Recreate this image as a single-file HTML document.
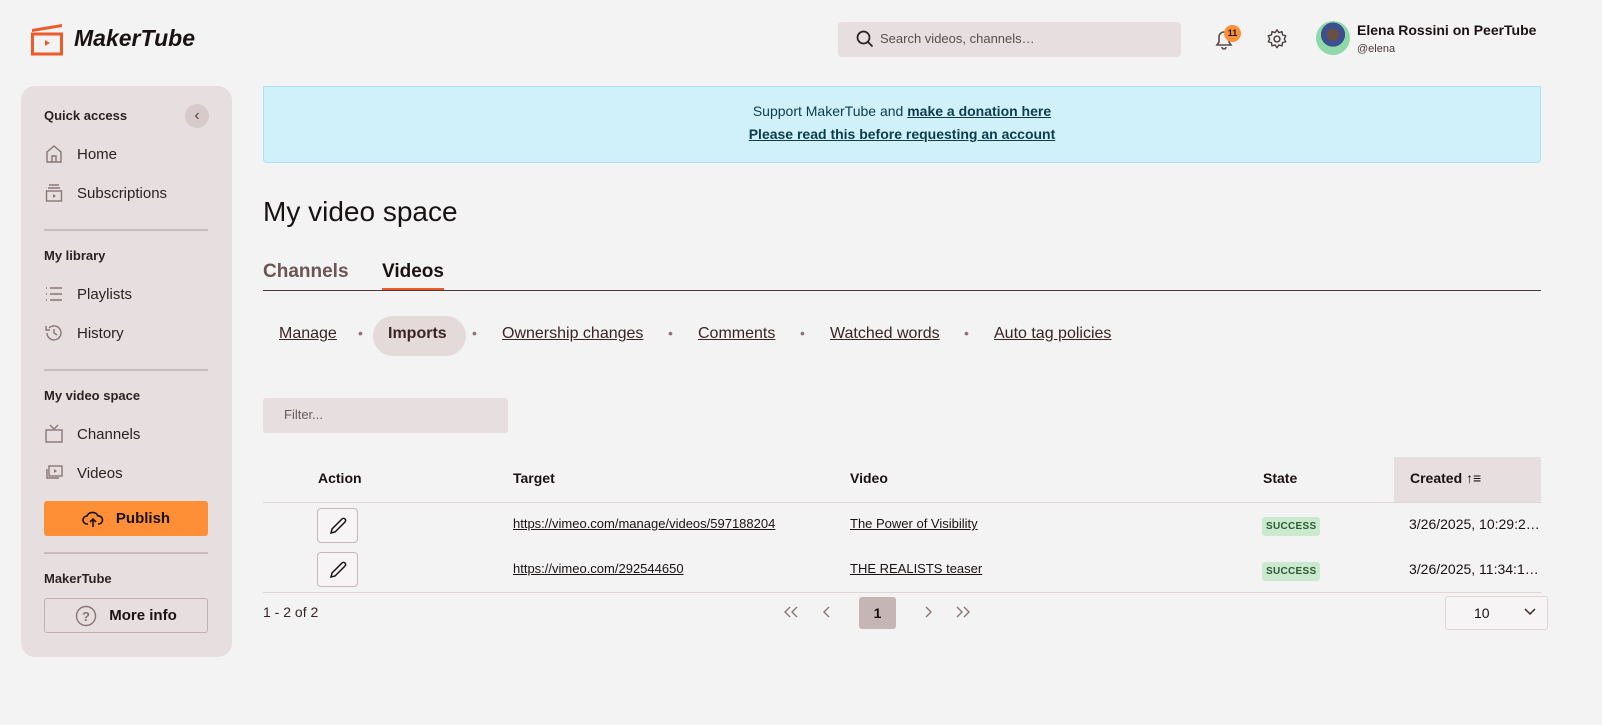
<!DOCTYPE html>
<html><head><meta charset="utf-8"><style>
*{box-sizing:border-box;margin:0;padding:0}
body{width:1602px;height:725px;background:#f3f3f3;font-family:"Liberation Sans",sans-serif;color:#1a1212;position:relative;overflow:hidden;font-size:15px}
.a{position:absolute}
a{color:inherit}
.side{left:21px;top:86px;width:211px;height:571px;background:#e7dfdf;border-radius:14px}
.sh{position:absolute;left:23px;font-size:13px;font-weight:bold;color:#2c1f1f}
.si{position:absolute;left:23px;font-size:15px;color:#2c1f1f;display:flex;align-items:center;gap:13px}
.si svg{width:20px;height:20px}
.hr{position:absolute;left:23px;width:164px;height:2px;background:#c9bcbc}
.u{text-decoration:underline}
.badge{background:#cbe9cf;color:#2d5a33;font-size:10px;font-weight:bold;padding:4px 4px;border-radius:3px;letter-spacing:.3px}
.pen{width:41px;height:35px;border:1px solid #c8b5b5;border-radius:4px;background:#f6f4f4;display:flex;align-items:center;justify-content:center}
.sn{position:absolute;top:325px;font-size:16px;color:#3a2424;white-space:nowrap}
.dot{position:absolute;top:325px;font-size:14px;color:#8a7575}
</style></head><body>
<svg class="a" style="left:31px;top:22px" width="34" height="36" viewBox="0 0 34 36"><path d="M1 7l30-5v3L1 10z" fill="#f05a28"/><rect x="1.5" y="12" width="29" height="20" fill="none" stroke="#f05a28" stroke-width="3"/><path d="M14 18l5 3-5 3z" fill="#f05a28"/></svg>
<div class="a" style="left:74px;top:25px;font-size:23px;font-weight:bold;font-style:italic">MakerTube</div>
<div class="a" style="left:838px;top:22px;width:343px;height:35px;background:#e7dfdf;border-radius:4px"></div>
<svg class="a" style="left:856px;top:30px" width="18" height="18" viewBox="0 0 18 18"><circle cx="7.5" cy="7.5" r="6" fill="none" stroke="#2c1f1f" stroke-width="1.7"/><path d="M12 12l4.5 4.5" stroke="#2c1f1f" stroke-width="1.7"/></svg>
<div class="a" style="left:880px;top:31px;font-size:13px;color:#5a4d4d">Search videos, channels…</div>
<svg class="a" style="left:1212px;top:27px" width="24" height="24" viewBox="0 0 24 24"><path d="M5 18h14l-2-3v-5a5 5 0 0 0-10 0v5zM10 20a2 2 0 0 0 4 0" fill="none" stroke="#5a4747" stroke-width="1.6"/></svg>
<div class="a" style="left:1224px;top:25px;width:17px;height:17px;border-radius:50%;background:#ff8f37;font-size:9px;font-weight:bold;text-align:center;line-height:17px">11</div>
<svg class="a" style="left:1266px;top:28px" width="22" height="22" viewBox="0 0 24 24"><circle cx="12" cy="12" r="3.2" fill="none" stroke="#4a3a3a" stroke-width="1.6"/><path d="M12 2l2 3 3.5-1 .5 3.5 3.5 1-1.5 3.5 1.5 3-3.5 1-.5 3.5-3.5-1-2 3-2-3-3.5 1-.5-3.5-3.5-1 1.5-3-1.5-3.5 3.5-1 .5-3.5 3.5 1z" fill="none" stroke="#4a3a3a" stroke-width="1.5" stroke-linejoin="round"/></svg>
<div class="a" style="left:1316px;top:21px;width:34px;height:34px;border-radius:50%;background:radial-gradient(circle at 50% 40%,#6a5040 0 22%,#3c4f8f 23% 45%,#8fd8a8 46%)"></div>
<div class="a" style="left:1357px;top:22px;font-size:14px;font-weight:bold">Elena Rossini on PeerTube</div>
<div class="a" style="left:1357px;top:43px;font-size:11px;color:#4a3a3a">@elena</div>

<div class="a side">
<div class="sh" style="top:22px">Quick access</div>
<div class="a" style="left:164px;top:18px;width:24px;height:24px;border-radius:50%;background:#d8caca;text-align:center;line-height:23px;color:#5a4040;font-size:16px">‹</div>
<div class="si" style="top:58px"><svg viewBox="0 0 20 20"><path d="M3 18V8l7-6 7 6v10zM8 18v-6h4v6" fill="none" stroke="#8a7575" stroke-width="1.4"/></svg>Home</div>
<div class="si" style="top:97px"><svg viewBox="0 0 20 20"><path d="M5 2h10M4 5h12" stroke="#8a7575" stroke-width="1.4"/><rect x="2.5" y="8" width="15" height="10" fill="none" stroke="#8a7575" stroke-width="1.4"/><path d="M9 11l3 2-3 2z" fill="#8a7575"/></svg>Subscriptions</div>
<div class="hr" style="top:143px"></div>
<div class="sh" style="top:162px">My library</div>
<div class="si" style="top:198px"><svg viewBox="0 0 20 20"><path d="M2 4h1M2 10h1M2 16h1M6 4h12M6 10h12M6 16h12" stroke="#8a7575" stroke-width="1.4"/></svg>Playlists</div>
<div class="si" style="top:237px"><svg viewBox="0 0 20 20"><path d="M3 10a7 7 0 1 0 2-5M2 3v4h4M10 6v4l3 2" fill="none" stroke="#8a7575" stroke-width="1.4"/></svg>History</div>
<div class="hr" style="top:283px"></div>
<div class="sh" style="top:302px">My video space</div>
<div class="si" style="top:338px"><svg viewBox="0 0 20 20"><rect x="2" y="6" width="16" height="12" fill="none" stroke="#8a7575" stroke-width="1.4"/><path d="M6 1l4 4 4-4" fill="none" stroke="#8a7575" stroke-width="1.4"/></svg>Channels</div>
<div class="si" style="top:377px"><svg viewBox="0 0 20 20"><rect x="5" y="3" width="13" height="10" fill="none" stroke="#8a7575" stroke-width="1.4"/><path d="M3 6v9h12" fill="none" stroke="#8a7575" stroke-width="1.4"/><path d="M10 6l3 2-3 2z" fill="#8a7575"/></svg>Videos</div>
<div class="a" style="left:23px;top:415px;width:164px;height:35px;background:#ff8f37;border-radius:3px;display:flex;align-items:center;justify-content:center;gap:12px;font-weight:bold;font-size:15px"><svg width="22" height="20" viewBox="0 0 22 20"><path d="M6 15H5a4 4 0 0 1 0-8 6 6 0 0 1 11 0 4 4 0 0 1 1 8h-1M11 18V10M8 13l3-3 3 3" fill="none" stroke="#1a1212" stroke-width="1.6"/></svg>Publish</div>
<div class="hr" style="top:466px"></div>
<div class="sh" style="top:485px">MakerTube</div>
<div class="a" style="left:23px;top:512px;width:164px;height:35px;border:1px solid #c0b0b0;border-radius:3px;display:flex;align-items:center;justify-content:center;gap:12px;font-weight:bold;font-size:15px"><svg width="22" height="22" viewBox="0 0 22 22"><circle cx="11" cy="11" r="9.5" fill="none" stroke="#8a7575" stroke-width="1.4"/><text x="11" y="16" font-size="13" text-anchor="middle" fill="#8a7575" font-family="Liberation Sans">?</text></svg>More info</div>
</div>

<div class="a" style="left:263px;top:86px;width:1278px;height:77px;background:#d0f1fa;border:1px solid #a9e3f0;border-radius:0 0 4px 4px;text-align:center;font-size:14px;color:#0c3d4a;line-height:23px;padding-top:13px">Support MakerTube and <b class="u">make a donation here</b><br><b class="u">Please read this before requesting an account</b></div>
<div class="a" style="left:263px;top:196px;font-size:28px">My video space</div>
<div class="a" style="left:263px;top:261px;font-size:19px;font-weight:bold;color:#6b5555">Channels</div>
<div class="a" style="left:382px;top:261px;font-size:19px;font-weight:bold">Videos</div>
<div class="a" style="left:382px;top:288px;width:62px;height:3px;background:#f05a28"></div>
<div class="a" style="left:263px;top:290px;width:1278px;height:1px;background:#4a3a3a"></div>
<div class="a" style="left:373px;top:316px;width:93px;height:40px;border-radius:20px;background:#e4dada"></div>
<div class="sn u" style="left:279px">Manage</div>
<div class="dot" style="left:358px">•</div>
<div class="sn" style="left:388px;font-weight:bold">Imports</div>
<div class="dot" style="left:472px">•</div>
<div class="sn u" style="left:502px">Ownership changes</div>
<div class="dot" style="left:668px">•</div>
<div class="sn u" style="left:698px">Comments</div>
<div class="dot" style="left:800px">•</div>
<div class="sn u" style="left:830px">Watched words</div>
<div class="dot" style="left:964px">•</div>
<div class="sn u" style="left:994px">Auto tag policies</div>
<div class="a" style="left:263px;top:398px;width:245px;height:35px;background:#e7dfdf;border-radius:3px;font-size:13px;color:#6a5a5a;padding:9px 0 0 21px">Filter...</div>

<div class="a" style="left:1394px;top:457px;width:147px;height:45px;background:#e7dfdf"></div>
<div class="a" style="left:263px;top:502px;width:1278px;height:1px;background:#e0d4d4"></div>
<div class="a" style="left:263px;top:592px;width:1278px;height:1px;background:#e0d4d4"></div>
<div class="a" style="top:470px;font-size:14px;font-weight:bold;left:318px">Action</div>
<div class="a" style="top:470px;font-size:14px;font-weight:bold;left:513px">Target</div>
<div class="a" style="top:470px;font-size:14px;font-weight:bold;left:850px">Video</div>
<div class="a" style="top:470px;font-size:14px;font-weight:bold;left:1263px">State</div>
<div class="a" style="top:470px;font-size:14px;font-weight:bold;left:1410px">Created <span style="font-weight:normal">↑≡</span></div>

<div class="a pen" style="left:317px;top:508px"><svg width="20" height="20" viewBox="0 0 20 20"><path d="M3 17l1-4L14 3a2 2 0 0 1 3 3L7 16z" fill="none" stroke="#1a1212" stroke-width="1.5"/></svg></div>
<div class="a pen" style="left:317px;top:552px"><svg width="20" height="20" viewBox="0 0 20 20"><path d="M3 17l1-4L14 3a2 2 0 0 1 3 3L7 16z" fill="none" stroke="#1a1212" stroke-width="1.5"/></svg></div>
<div class="a u" style="left:513px;top:516px;font-size:13px">https://vimeo.com/manage/videos/597188204</div>
<div class="a u" style="left:513px;top:561px;font-size:13px">https://vimeo.com/292544650</div>
<div class="a u" style="left:850px;top:516px;font-size:13px">The Power of Visibility</div>
<div class="a u" style="left:850px;top:561px;font-size:13px">THE REALISTS teaser</div>
<div class="a badge" style="left:1262px;top:517px">SUCCESS</div>
<div class="a badge" style="left:1262px;top:562px">SUCCESS</div>
<div class="a" style="left:1409px;top:516px;font-size:14px;width:132px;overflow:hidden;white-space:nowrap">3/26/2025, 10:29:2…</div>
<div class="a" style="left:1409px;top:561px;font-size:14px;width:132px;overflow:hidden;white-space:nowrap">3/26/2025, 11:34:1…</div>

<div class="a" style="left:263px;top:604px;font-size:14px;color:#3a2424">1 - 2 of 2</div>
<svg class="a" style="left:782px;top:605px" width="18" height="14" viewBox="0 0 18 14"><path d="M8 2L3 7l5 5M15 2l-5 5 5 5" fill="none" stroke="#8a7575" stroke-width="1.4"/></svg>
<svg class="a" style="left:821px;top:605px" width="12" height="14" viewBox="0 0 12 14"><path d="M8 2L3 7l5 5" fill="none" stroke="#8a7575" stroke-width="1.4"/></svg>
<div class="a" style="left:859px;top:597px;width:37px;height:32px;background:#c5b5b5;border-radius:3px;text-align:center;line-height:32px;font-weight:bold;font-size:14px">1</div>
<svg class="a" style="left:922px;top:605px" width="12" height="14" viewBox="0 0 12 14"><path d="M4 2l5 5-5 5" fill="none" stroke="#8a7575" stroke-width="1.4"/></svg>
<svg class="a" style="left:954px;top:605px" width="18" height="14" viewBox="0 0 18 14"><path d="M3 2l5 5-5 5M10 2l5 5-5 5" fill="none" stroke="#8a7575" stroke-width="1.4"/></svg>
<div class="a" style="left:1445px;top:596px;width:103px;height:34px;border:1px solid #e0d4d4;border-radius:3px;background:#f6f4f4;font-size:14px;padding:8px 0 0 28px">10</div>
<svg class="a" style="left:1523px;top:607px" width="14" height="10" viewBox="0 0 14 10"><path d="M2 2l5 5 5-5" fill="none" stroke="#3a2424" stroke-width="1.5"/></svg>
</body></html>
